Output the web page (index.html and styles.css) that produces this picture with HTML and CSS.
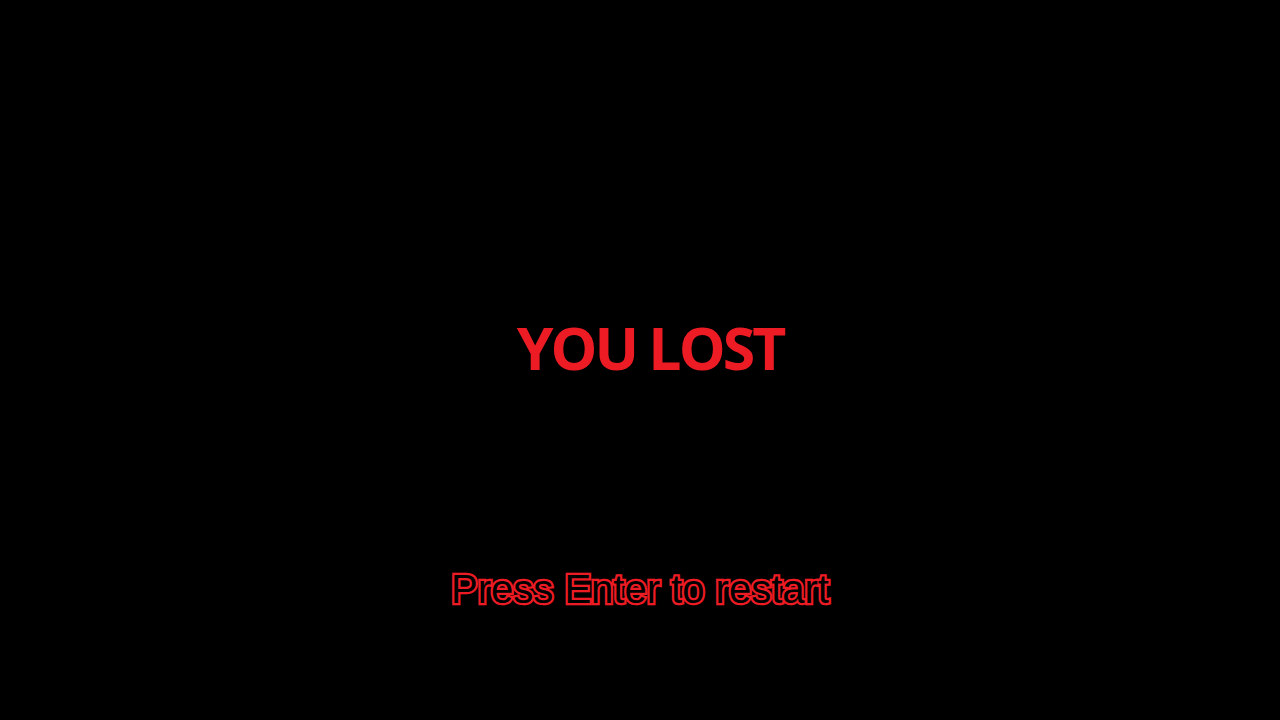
FILE: index.html
```html
<!DOCTYPE html>
<html>
<head>
<meta charset="utf-8">
<link rel="stylesheet" href="styles.css">
</head>
<body>
<main class="screen">
  <h1 class="title">YOU LOST</h1>
  <p class="hint">Press Enter to restart</p>
</main>
</body>
</html>
```
FILE: styles.css
```css
html, body {
  margin: 0;
  padding: 0;
  background: #000;
}
.screen {
  width: 1280px;
  height: 720px;
  display: flex;
  flex-direction: column;
  align-items: center;
  padding-top: 309px;
  box-sizing: border-box;
}
.title {
  margin: 0 0 0 20px;
  font-family: "Open Sans", sans-serif;
  font-weight: 700;
  font-size: 59px;
  line-height: 76px;
  color: #ed1c24;
  letter-spacing: -3px;
}
.hint {
  margin: 180px 0 0 0;
  font-family: "Liberation Sans", Arial, sans-serif;
  font-size: 40px;
  line-height: 48px;
  color: #000;
  -webkit-text-stroke: 4.5px #ed1c24;
  paint-order: stroke fill;
}
```
